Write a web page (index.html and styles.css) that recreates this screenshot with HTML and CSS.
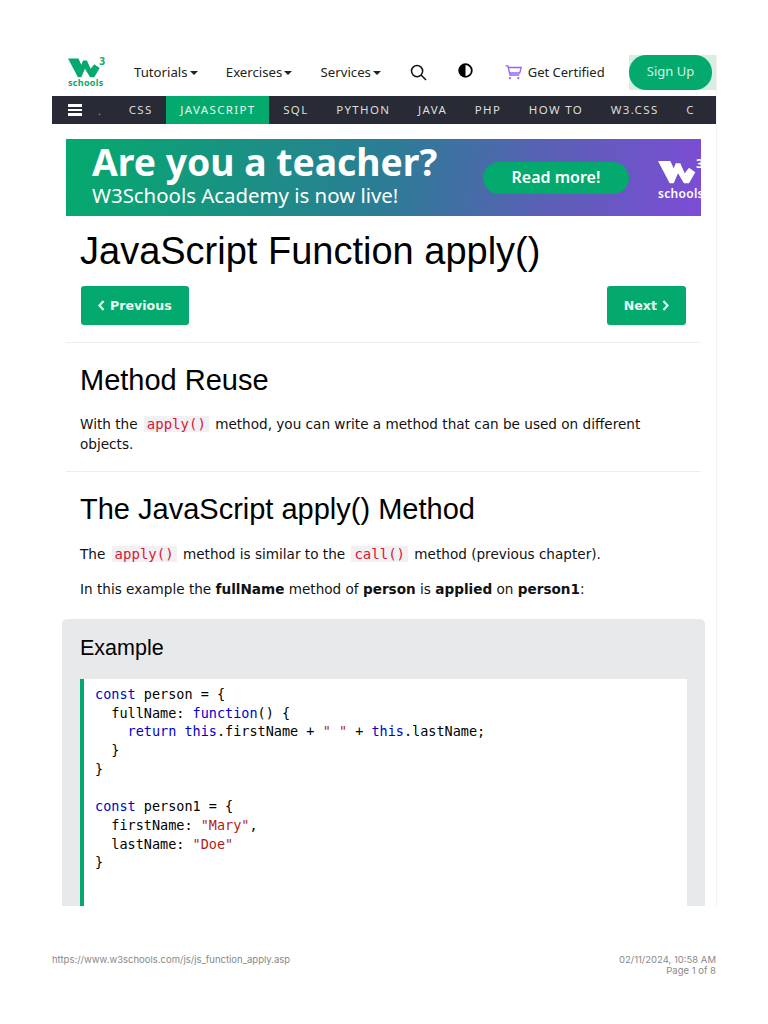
FILE: index.html
```html
<!DOCTYPE html>
<html lang="en">

<head>
    <meta charset="UTF-8">
    <meta name="viewport" content="width=device-width, initial-scale=1.0">
    <title>JavaScript Function apply()</title>
    <link rel="stylesheet" href="styles.css">
</head>

<body>
    <div class="page">
        <header class="top-bar">
            <div class="logo">
                <svg width="39" height="23" viewBox="0 -4 46 27">
                    <polygon points="0,0 12.3,0 15.7,7.3 17.7,2.3 22.3,2.3 26.7,12.3 31,6.7 37.3,11.3 31,22.3 26,22.3 20,12.3 15.7,22.3 11.7,22.3" />
                    <text x="37" y="8">3</text>
                </svg>
                <span class="logo-text">schools</span>
            </div>
            <a class="top-link tutorials">Tutorials<i class="caret"></i></a>
            <a class="top-link">Exercises<i class="caret"></i></a>
            <a class="top-link">Services<i class="caret"></i></a>
            <svg class="search-icon" width="17" height="17" viewBox="0 0 18 18">
                <circle cx="7.5" cy="7.5" r="5.9" />
                <line x1="11.7" y1="11.7" x2="17" y2="17" />
            </svg>
            <svg class="contrast-icon" width="15" height="15" viewBox="0 0 15 15">
                <circle cx="7.5" cy="7.5" r="6.3" />
                <path d="M7.5 1.2a6.3 6.3 0 0 0 0 12.6z" />
            </svg>
            <svg class="cart-icon" width="17" height="15" viewBox="0 0 17 15">
                <path d="M.5.8h2.4l2.1 9.2h9.3M3.2 2.5h13l-1.5 5.5H4.5" />
                <circle cx="4.9" cy="13.2" r="1.1" />
                <circle cx="13.3" cy="13.2" r="1.1" />
            </svg>
            <a class="certified">Get Certified</a>
            <div class="signup-wrap"><a class="signup">Sign Up</a></div>
        </header>

        <nav class="subject-nav">
            <span class="burger"><i></i><i></i><i></i></span>
            <span class="dot">.</span>
            <a>CSS</a>
            <a class="active">JAVASCRIPT</a>
            <a>SQL</a>
            <a>PYTHON</a>
            <a>JAVA</a>
            <a>PHP</a>
            <a>HOW TO</a>
            <a>W3.CSS</a>
            <a>C</a>
        </nav>

        <main class="content">
            <div class="banner">
                <div class="banner-text">
                    <div class="banner-title">Are you a teacher?</div>
                    <div class="banner-sub">W3Schools Academy is now live!</div>
                </div>
                <a class="banner-btn">Read more!</a>
                <div class="banner-logo">
                    <svg width="46" height="27" viewBox="0 -4 46 27">
                        <polygon points="0,0 12.3,0 15.7,7.3 17.7,2.3 22.3,2.3 26.7,12.3 31,6.7 37.3,11.3 31,22.3 26,22.3 20,12.3 15.7,22.3 11.7,22.3" />
                        <text x="38" y="7">3</text>
                    </svg>
                    <span>schools</span>
                </div>
            </div>

            <h1>JavaScript Function apply()</h1>

            <div class="pager">
                <a class="btn"><svg class="chev" width="7" height="11" viewBox="0 0 7 11"><polyline points="5.6,1 1.4,5.5 5.6,10" /></svg>Previous</a>
                <a class="btn">Next<svg class="chev next-chev" width="7" height="11" viewBox="0 0 7 11"><polyline points="1.4,1 5.6,5.5 1.4,10" /></svg></a>
            </div>

            <hr>

            <h2>Method Reuse</h2>
            <p class="first-para">With the <code>apply()</code> method, you can write a method that can be used on different objects.</p>

            <hr>

            <h2>The JavaScript apply() Method</h2>
            <p>The <code>apply()</code> method is similar to the <code>call()</code> method (previous chapter).</p>
            <p class="second-para">In this example the <b>fullName</b> method of <b>person</b> is <b>applied</b> on <b>person1</b>:</p>

            <section class="example">
                <h3>Example</h3>
                <pre class="code"><span class="kw">const</span> person = {
  fullName: <span class="kw">function</span>() {
    <span class="kw">return</span> <span class="kw">this</span>.firstName + <span class="str">" "</span> + <span class="kw">this</span>.lastName;
  }
}

<span class="kw">const</span> person1 = {
  firstName: <span class="str">"Mary"</span>,
  lastName: <span class="str">"Doe"</span>
}</pre>
            </section>
        </main>
    </div>

    <footer class="print-footer">
        <span>https://www.w3schools.com/js/js_function_apply.asp</span>
        <span class="print-meta">02/11/2024, 10:58 AM<br>Page 1 of 8</span>
    </footer>
</body>

</html>
```

FILE: styles.css
```css
body {
    margin: 0;
    background-color: #fff;
    color: #111;
    font-family: 'DejaVu Sans', sans-serif;
    font-size: 13.6px;
}

a {
    text-decoration: none;
}

.page {
    width: 664px;
    height: 851px;
    margin: 55px 0 0 52px;
    overflow: hidden;
    border-right: 1px solid #f3f3f3;
}

/* top bar */
.top-bar {
    display: flex;
    align-items: center;
    height: 41px;
    padding-bottom: 7px;
    box-sizing: border-box;
    font-family: 'Noto Sans', sans-serif;
    font-size: 13.2px;
    color: #222;
}

.logo {
    display: flex;
    flex-direction: column;
    flex: none;
    width: 50px;
    margin-left: 16px;
    align-self: flex-start;
}

.logo svg {
    fill: #04aa6d;
}

.logo text {
    font-size: 12px;
    font-weight: 700;
}

.logo-text {
    font-size: 9px;
    font-weight: 700;
    letter-spacing: 0.3px;
    color: #04aa6d;
    line-height: 10px;
}

.top-link {
    flex: none;
    margin-right: 28.3px;
    color: #222;
}

.tutorials {
    margin-left: 16px;
}

.caret {
    display: inline-block;
    margin-left: 2px;
    vertical-align: 2px;
    border: 4.5px solid transparent;
    border-top: 4.5px solid #222;
    border-bottom: 0;
}

.search-icon {
    flex: none;
    margin-left: 0.5px;
}

.search-icon circle,
.search-icon line {
    fill: none;
    stroke: #111;
    stroke-width: 1.6;
}

.contrast-icon {
    flex: none;
    margin-left: 31px;
    margin-top: -3px;
}

.contrast-icon circle {
    fill: #fff;
    stroke: #000;
    stroke-width: 1.8;
}

.cart-icon {
    flex: none;
    margin-left: 32px;
    margin-top: 1px;
}

.cart-icon path {
    fill: none;
    stroke: #9763f6;
    stroke-width: 1.3;
}

.cart-icon circle {
    fill: #9763f6;
}

.certified {
    flex: none;
    margin-left: 6px;
    color: #222;
    font-size: 13px;
}

.signup-wrap {
    flex: none;
    align-self: flex-start;
    margin-left: auto;
    width: 87px;
    height: 35px;
    background-color: #d9eee3;
}

.signup {
    display: block;
    width: 83px;
    height: 35px;
    line-height: 33px;
    text-align: center;
    color: #d5f0e2;
    font-size: 13px;
    background-color: #04aa6d;
    border-radius: 17px;
}

/* subject nav */
.subject-nav {
    display: flex;
    align-items: center;
    height: 28px;
    background-color: #282a35;
    font-family: 'Noto Sans', sans-serif;
    font-size: 11.5px;
    letter-spacing: 1.35px;
    color: #ddd;
    white-space: nowrap;
}

.subject-nav a {
    padding: 0 13.8px;
    line-height: 28px;
    color: #ddd;
}

.subject-nav a.active {
    background-color: #04aa6d;
    color: #e5f7ef;
}

.burger {
    display: flex;
    flex-direction: column;
    gap: 2px;
    margin-left: 16px;
}

.burger i {
    display: block;
    width: 14px;
    height: 2.5px;
    background-color: #fff;
}

.dot {
    margin: 0 12.5px 0 16px;
    color: #999;
}

/* content */
.content {
    width: 635px;
    margin: 15px 0 0 14px;
}

.banner {
    display: flex;
    align-items: center;
    height: 77px;
    overflow: hidden;
    background: linear-gradient(100deg, #04aa6d 0%, #2b7d95 50%, #5a60b5 75%, #7d4cd6 100%);
    color: #fff;
    font-family: 'Noto Sans', sans-serif;
}

.banner-text {
    flex: none;
    width: 391px;
    margin-left: 26px;
    margin-top: -7px;
}

.banner-title {
    font-size: 37.3px;
    font-weight: 700;
    line-height: 42px;
    white-space: nowrap;
}

.banner-sub {
    font-size: 20.4px;
    line-height: 25px;
}

.banner-btn {
    flex: none;
    width: 146px;
    height: 32px;
    line-height: 31px;
    text-align: center;
    font-size: 16px;
    font-weight: 600;
    color: #fff;
    background-color: #04aa6d;
    border-radius: 16px;
    margin-right: 29px;
}

.banner-logo {
    flex: none;
    display: flex;
    flex-direction: column;
    align-self: flex-start;
    margin-top: 18px;
    font-size: 12px;
    font-weight: 600;
    line-height: 14px;
    letter-spacing: 0.3px;
}

.banner-logo span {
    margin-top: 3px;
}

.banner-logo svg {
    fill: #fff;
}

.banner-logo text {
    font-size: 13px;
    font-weight: 700;
}

h1 {
    margin: 15px 0 14px 14px;
    color: #000;
    font-family: 'Liberation Sans', sans-serif;
    font-size: 38px;
    font-weight: 400;
    line-height: 41px;
}

.pager {
    display: flex;
    justify-content: space-between;
    margin: 0 15px;
}

.btn {
    display: flex;
    align-items: center;
    gap: 5px;
    padding: 0 17px;
    height: 39px;
    background-color: #04aa6d;
    border-radius: 3px;
    color: #e9f8f1;
    font-size: 12.6px;
    font-weight: 700;
}

.chev {
    flex: none;
}

.chev polyline {
    fill: none;
    stroke: #e9f8f1;
    stroke-width: 2.2;
}

hr {
    margin: 17px 0 0;
    border: 0;
    border-top: 1px solid #eeeeee;
}

h2 {
    margin: 20px 0 0 14px;
    color: #000;
    font-family: 'Liberation Sans', sans-serif;
    font-size: 29px;
    font-weight: 400;
    line-height: 34px;
}

p {
    margin: 18px 0 0 14px;
    width: 590px;
    line-height: 20px;
}

.first-para {
    margin-top: 17px;
    margin-bottom: 17px;
}

.second-para {
    margin-top: 15px;
}

code {
    padding: 0 3px;
    margin: 0 2px;
    background-color: #f1f1f1;
    color: #dc143c;
    font-family: 'DejaVu Sans Mono', monospace;
    font-size: 14px;
}

.example {
    margin: 20px -4px 0;
    padding: 13px 18px 0;
    height: 300px;
    background-color: #e7e9eb;
    border-radius: 5px 5px 0 0;
}

h3 {
    margin: 0;
    color: #000;
    font-family: 'Liberation Sans', sans-serif;
    font-size: 21.5px;
    font-weight: 400;
    line-height: 32px;
}

.code {
    height: 400px;
    margin: 15px 0 0;
    padding: 6px 0 0 11px;
    background-color: #fff;
    border-left: 4px solid #04aa6d;
    font-family: 'DejaVu Sans Mono', monospace;
    font-size: 13.5px;
    line-height: 18.7px;
    color: #000;
}

.kw {
    color: #0000cd;
}

.str {
    color: #b01c1c;
}

/* print footer */
.print-footer {
    display: flex;
    justify-content: space-between;
    width: 664px;
    margin: 48px 0 0 52px;
    font-family: 'Inter', sans-serif;
    font-size: 9.5px;
    line-height: 11px;
    color: #888;
}

.print-meta {
    text-align: right;
}
```
